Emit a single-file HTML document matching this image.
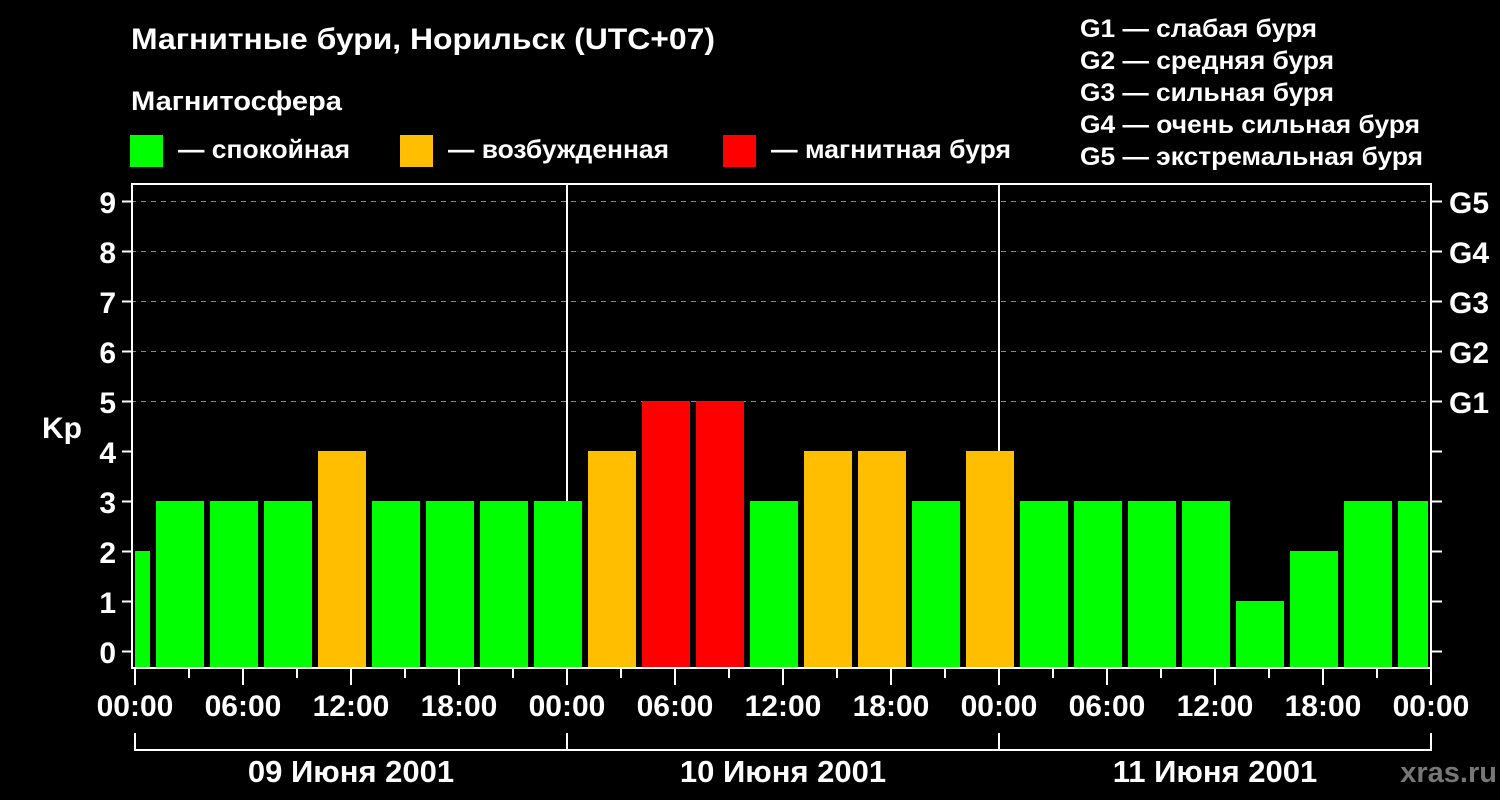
<!DOCTYPE html>
<html><head><meta charset="utf-8"><style>
html,body{margin:0;padding:0;background:#000;}
svg{display:block;font-family:"Liberation Sans",sans-serif;font-weight:bold;}
</style></head><body>
<svg width="1500" height="800" viewBox="0 0 1500 800" xmlns="http://www.w3.org/2000/svg">
<rect width="1500" height="800" fill="#000"/>
<g fill="#fff">
<text x="131" y="49" font-size="30" textLength="584" lengthAdjust="spacingAndGlyphs">Магнитные бури, Норильск (UTC+07)</text>
<text x="131" y="110" font-size="27" textLength="211" lengthAdjust="spacingAndGlyphs">Магнитосфера</text>
<rect x="130" y="135" width="33" height="32" fill="#00ff00"/>
<rect x="400" y="135" width="33" height="32" fill="#ffbf00"/>
<rect x="723" y="135" width="33" height="32" fill="#ff0000"/>
<text x="178" y="158" font-size="26" textLength="172" lengthAdjust="spacingAndGlyphs">— спокойная</text>
<text x="448" y="158" font-size="26" textLength="221" lengthAdjust="spacingAndGlyphs">— возбужденная</text>
<text x="771" y="158" font-size="26" textLength="240" lengthAdjust="spacingAndGlyphs">— магнитная буря</text>
<g font-size="25">
<text x="1080" y="37" textLength="237" lengthAdjust="spacingAndGlyphs">G1 — слабая буря</text>
<text x="1080" y="69" textLength="254" lengthAdjust="spacingAndGlyphs">G2 — средняя буря</text>
<text x="1080" y="101" textLength="254" lengthAdjust="spacingAndGlyphs">G3 — сильная буря</text>
<text x="1080" y="133" textLength="340" lengthAdjust="spacingAndGlyphs">G4 — очень сильная буря</text>
<text x="1080" y="165" textLength="343" lengthAdjust="spacingAndGlyphs">G5 — экстремальная буря</text>
</g>
</g>
<g stroke="#888" stroke-width="1" stroke-dasharray="5,5">
<line x1="131" x2="1432" y1="201.5" y2="201.5"/>
<line x1="131" x2="1432" y1="251.5" y2="251.5"/>
<line x1="131" x2="1432" y1="301.5" y2="301.5"/>
<line x1="131" x2="1432" y1="351.5" y2="351.5"/>
<line x1="131" x2="1432" y1="401.5" y2="401.5"/>
</g>
<g stroke="#fff" stroke-width="2">
<line x1="567" x2="567" y1="183" y2="668"/>
<line x1="999" x2="999" y1="183" y2="668"/>
</g>
<g>
<rect x="135" y="551" width="15" height="117" fill="#00ff00"/>
<rect x="156" y="501" width="48" height="167" fill="#00ff00"/>
<rect x="210" y="501" width="48" height="167" fill="#00ff00"/>
<rect x="264" y="501" width="48" height="167" fill="#00ff00"/>
<rect x="318" y="451" width="48" height="217" fill="#ffbf00"/>
<rect x="372" y="501" width="48" height="167" fill="#00ff00"/>
<rect x="426" y="501" width="48" height="167" fill="#00ff00"/>
<rect x="480" y="501" width="48" height="167" fill="#00ff00"/>
<rect x="534" y="501" width="48" height="167" fill="#00ff00"/>
<rect x="588" y="451" width="48" height="217" fill="#ffbf00"/>
<rect x="642" y="401" width="48" height="267" fill="#ff0000"/>
<rect x="696" y="401" width="48" height="267" fill="#ff0000"/>
<rect x="750" y="501" width="48" height="167" fill="#00ff00"/>
<rect x="804" y="451" width="48" height="217" fill="#ffbf00"/>
<rect x="858" y="451" width="48" height="217" fill="#ffbf00"/>
<rect x="912" y="501" width="48" height="167" fill="#00ff00"/>
<rect x="966" y="451" width="48" height="217" fill="#ffbf00"/>
<rect x="1020" y="501" width="48" height="167" fill="#00ff00"/>
<rect x="1074" y="501" width="48" height="167" fill="#00ff00"/>
<rect x="1128" y="501" width="48" height="167" fill="#00ff00"/>
<rect x="1182" y="501" width="48" height="167" fill="#00ff00"/>
<rect x="1236" y="601" width="48" height="67" fill="#00ff00"/>
<rect x="1290" y="551" width="48" height="117" fill="#00ff00"/>
<rect x="1344" y="501" width="48" height="167" fill="#00ff00"/>
<rect x="1398" y="501" width="30" height="167" fill="#00ff00"/>
</g>
<rect x="132" y="184" width="1299" height="484" fill="none" stroke="#fff" stroke-width="2"/>
<g stroke="#fff" stroke-width="2">
<line x1="122" x2="131" y1="201.5" y2="201.5"/><line x1="122" x2="131" y1="251.5" y2="251.5"/>
<line x1="122" x2="131" y1="301.5" y2="301.5"/><line x1="122" x2="131" y1="351.5" y2="351.5"/>
<line x1="122" x2="131" y1="401.5" y2="401.5"/><line x1="122" x2="131" y1="451.5" y2="451.5"/>
<line x1="122" x2="131" y1="501.5" y2="501.5"/><line x1="122" x2="131" y1="551.5" y2="551.5"/>
<line x1="122" x2="131" y1="601.5" y2="601.5"/><line x1="122" x2="131" y1="651.5" y2="651.5"/>
<line x1="1432" x2="1442" y1="201.5" y2="201.5"/><line x1="1432" x2="1442" y1="251.5" y2="251.5"/>
<line x1="1432" x2="1442" y1="301.5" y2="301.5"/><line x1="1432" x2="1442" y1="351.5" y2="351.5"/>
<line x1="1432" x2="1442" y1="401.5" y2="401.5"/><line x1="1432" x2="1442" y1="451.5" y2="451.5"/>
<line x1="1432" x2="1442" y1="501.5" y2="501.5"/><line x1="1432" x2="1442" y1="551.5" y2="551.5"/>
<line x1="1432" x2="1442" y1="601.5" y2="601.5"/><line x1="1432" x2="1442" y1="651.5" y2="651.5"/>
<line x1="135" x2="135" y1="669" y2="685"/><line x1="189" x2="189" y1="669" y2="678"/>
<line x1="243" x2="243" y1="669" y2="685"/><line x1="297" x2="297" y1="669" y2="678"/>
<line x1="351" x2="351" y1="669" y2="685"/><line x1="405" x2="405" y1="669" y2="678"/>
<line x1="459" x2="459" y1="669" y2="685"/><line x1="513" x2="513" y1="669" y2="678"/>
<line x1="567" x2="567" y1="669" y2="685"/><line x1="621" x2="621" y1="669" y2="678"/>
<line x1="675" x2="675" y1="669" y2="685"/><line x1="729" x2="729" y1="669" y2="678"/>
<line x1="783" x2="783" y1="669" y2="685"/><line x1="837" x2="837" y1="669" y2="678"/>
<line x1="891" x2="891" y1="669" y2="685"/><line x1="945" x2="945" y1="669" y2="678"/>
<line x1="999" x2="999" y1="669" y2="685"/><line x1="1053" x2="1053" y1="669" y2="678"/>
<line x1="1107" x2="1107" y1="669" y2="685"/><line x1="1161" x2="1161" y1="669" y2="678"/>
<line x1="1215" x2="1215" y1="669" y2="685"/><line x1="1269" x2="1269" y1="669" y2="678"/>
<line x1="1323" x2="1323" y1="669" y2="685"/><line x1="1377" x2="1377" y1="669" y2="678"/>
<line x1="1431" x2="1431" y1="669" y2="685"/>
<polyline points="135,733 135,750 1431,750 1431,733" fill="none"/>
<line x1="567" x2="567" y1="733" y2="750"/><line x1="999" x2="999" y1="733" y2="750"/>
</g>
<g fill="#fff" font-size="30" text-anchor="end">
<text x="116" y="213">9</text><text x="116" y="263">8</text><text x="116" y="313">7</text>
<text x="116" y="363">6</text><text x="116" y="413">5</text><text x="116" y="463">4</text>
<text x="116" y="513">3</text><text x="116" y="563">2</text><text x="116" y="613">1</text>
<text x="116" y="663">0</text>
</g>
<text x="42" y="438" font-size="30" fill="#fff">Kp</text>
<g fill="#fff" font-size="30">
<text x="1449" y="213">G5</text><text x="1449" y="263">G4</text><text x="1449" y="313">G3</text>
<text x="1449" y="363">G2</text><text x="1449" y="413">G1</text>
</g>
<g fill="#fff" font-size="30" text-anchor="middle">
<text x="135" y="716">00:00</text><text x="243" y="716">06:00</text><text x="351" y="716">12:00</text>
<text x="459" y="716">18:00</text><text x="567" y="716">00:00</text><text x="675" y="716">06:00</text>
<text x="783" y="716">12:00</text><text x="891" y="716">18:00</text><text x="999" y="716">00:00</text>
<text x="1107" y="716">06:00</text><text x="1215" y="716">12:00</text><text x="1323" y="716">18:00</text>
<text x="1431" y="716">00:00</text>
</g>
<g fill="#fff" font-size="31" text-anchor="middle">
<text x="351" y="782">09 Июня 2001</text>
<text x="783" y="782">10 Июня 2001</text>
<text x="1215" y="782">11 Июня 2001</text>
</g>
<text x="1497" y="782" font-size="29" fill="#777" text-anchor="end">xras.ru</text>
</svg>
</body></html>
